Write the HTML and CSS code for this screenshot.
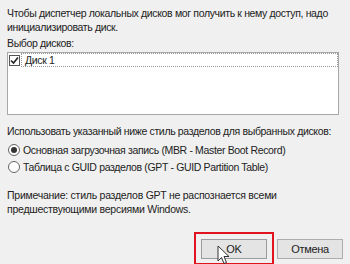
FILE: index.html
```html
<!DOCTYPE html>
<html lang="ru">
<head>
<meta charset="utf-8">
<link rel="stylesheet" href="styles.css">
</head>
<body>
<div class="dialog">
  <p class="intro">Чтобы диспетчер локальных дисков мог получить к нему доступ, надо инициализировать диск.</p>
  <div class="label">Выбор дисков:</div>
  <div class="listbox">
    <div class="row">
      <span class="check"><svg width="9" height="9" viewBox="0 0 9 9"><path d="M1 4.5 L3.5 7 L8 1.5" fill="none" stroke="#222" stroke-width="1.6"/></svg></span>
      <span class="row-label">Диск 1</span>
    </div>
  </div>
  <div class="label style-label">Использовать указанный ниже стиль разделов для выбранных дисков:</div>
  <div class="radios">
    <div class="radio-row"><span class="radio"><span class="dot"></span></span><span>Основная загрузочная запись (MBR - Master Boot Record)</span></div>
    <div class="radio-row"><span class="radio"></span><span>Таблица с GUID разделов (GPT - GUID Partition Table)</span></div>
  </div>
  <p class="note">Примечание: стиль разделов GPT не распознается всеми предшествующими версиями Windows.</p>
  <div class="buttons">
    <div class="highlight">
      <button class="btn ok">OK</button>
      <svg class="cursor" width="14" height="20" viewBox="0 0 14 20"><path d="M1 1 L1 16 L4.5 12.5 L7 18.5 L9.5 17.5 L7 11.5 L12 11.5 Z" fill="#fff" stroke="#333" stroke-width="1" stroke-linejoin="round"/></svg>
    </div>
    <button class="btn">Отмена</button>
  </div>
</div>
</body>
</html>
```
FILE: styles.css
```css
html, body {
  margin: 0;
  padding: 0;
  background: #f0f0f0;
}
body {
  width: 350px;
  height: 264px;
  overflow: hidden;
  font-family: "Liberation Sans", Arial, sans-serif;
  font-size: 10.5px;
  letter-spacing: -0.35px;
  color: #222;
}
.dialog {
  padding: 6px 11px 0 7px;
}
.intro {
  margin: 0;
  line-height: 14px;
}
.label {
  margin-top: 2px;
  line-height: 14px;
}
.listbox {
  margin-top: 2px;
  height: 61px;
  background: #fff;
  border: 1px solid #a8a8a8;
}
.row {
  display: flex;
  align-items: center;
  height: 14px;
}
.check {
  width: 9px;
  height: 9px;
  border: 1px solid #555;
  background: #fff;
  display: flex;
  align-items: center;
  justify-content: center;
  margin: 0 1px 0 1px;
}
.row-label {
  flex: 1;
  height: 12px;
  line-height: 12px;
  border: 1px dotted #999;
  padding-left: 3px;
}
.style-label {
  margin-top: 9px;
}
.radios {
  margin-top: 5px;
  display: flex;
  flex-direction: column;
  gap: 3px;
}
.radio-row {
  display: flex;
  align-items: center;
  line-height: 14px;
}
.radio {
  width: 10px;
  height: 10px;
  border: 1px solid #666;
  border-radius: 50%;
  background: #fff;
  margin: 0 3px 0 1px;
  display: flex;
  align-items: center;
  justify-content: center;
}
.dot {
  width: 6px;
  height: 6px;
  border-radius: 50%;
  background: #333;
}
.note {
  margin: 14px 0 0 0;
  line-height: 14px;
  letter-spacing: -0.25px;
}
.buttons {
  display: flex;
  justify-content: flex-end;
  align-items: center;
  gap: 3px;
  margin: 16px -4px 0 0;
}
.highlight {
  position: relative;
  border: 2px solid #e0141e;
  padding: 5px 5px 4px 5px;
}
.btn {
  font-family: "Liberation Sans", Arial, sans-serif;
  font-size: 11px;
  letter-spacing: -0.3px;
  color: #222;
  height: 20px;
  width: 66px;
  background: #e4e4e4;
  border: 1px solid #adadad;
  padding: 0;
  display: block;
}
.ok {
  border-color: #9c9c9c;
}
.cursor {
  position: absolute;
  left: 21px;
  top: 11px;
}
```
